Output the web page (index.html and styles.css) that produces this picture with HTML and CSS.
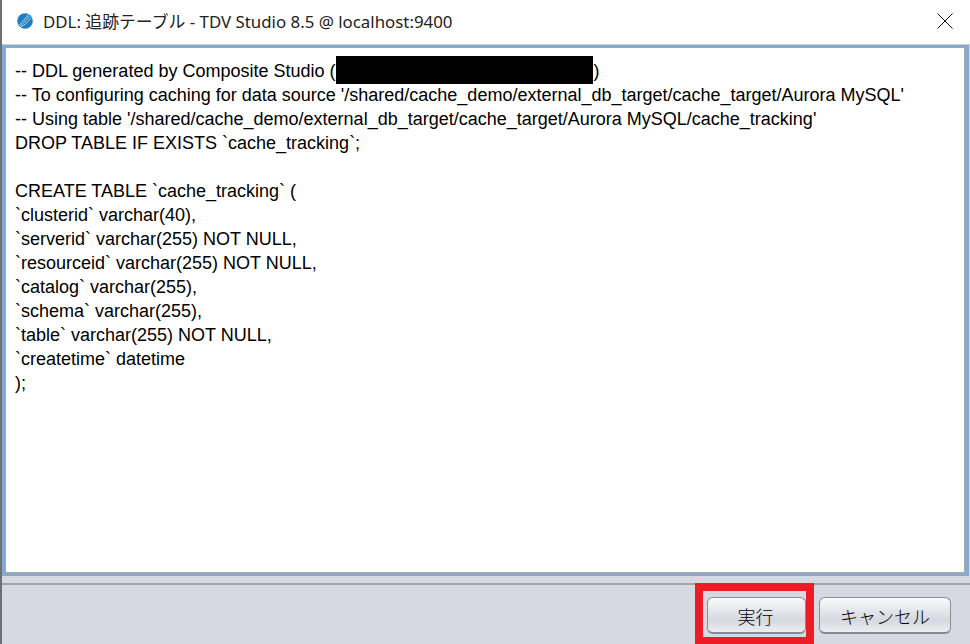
FILE: index.html
```html
<!DOCTYPE html>
<html lang="ja">
<head>
<meta charset="utf-8">
<title>DDL</title>
<link rel="stylesheet" href="styles.css">
</head>
<body>
<div class="window">
  <header class="titlebar">
    <svg class="logo" width="16" height="16" viewBox="0 0 16 16">
      <circle cx="8" cy="8" r="7.8" fill="#1f7fc4"/>
      <path d="M1.5 12.5 C5 9.5 8 6 11.5 1.5 M2.5 13.5 C6 11 9.5 7.5 12.5 3 M4 14 C7.5 12 11 9 14 5" stroke="#d5e9f6" stroke-width="0.8" fill="none"/>
    </svg>
    <span class="title">DDL: 追跡テーブル - TDV Studio 8.5 @ localhost:9400</span>
    <svg class="close" width="16" height="16" viewBox="0 0 16 16">
      <path d="M0.5 0.5 L15.5 15.5 M15.5 0.5 L0.5 15.5" stroke="#111" stroke-width="1" fill="none"/>
    </svg>
  </header>
  <main class="editor-frame">
    <div class="editor">
      <div class="line">-- DDL generated by Composite Studio (<span class="redact-slot"><span class="redact"></span></span>)</div>
      <div class="line">-- To configuring caching for data source '/shared/cache_demo/external_db_target/cache_target/Aurora MySQL'</div>
      <div class="line">-- Using table '/shared/cache_demo/external_db_target/cache_target/Aurora MySQL/cache_tracking'</div>
      <div class="line">DROP TABLE IF EXISTS `cache_tracking`;</div>
      <div class="line">&nbsp;</div>
      <div class="line">CREATE TABLE `cache_tracking` (</div>
      <div class="line">`clusterid` varchar(40),</div>
      <div class="line">`serverid` varchar(255) NOT NULL,</div>
      <div class="line">`resourceid` varchar(255) NOT NULL,</div>
      <div class="line">`catalog` varchar(255),</div>
      <div class="line">`schema` varchar(255),</div>
      <div class="line">`table` varchar(255) NOT NULL,</div>
      <div class="line">`createtime` datetime</div>
      <div class="line">);</div>
    </div>
  </main>
  <footer class="actions">
    <div class="highlight"><button class="btn btn-run">実行</button></div>
    <button class="btn btn-cancel">キャンセル</button>
  </footer>
</div>
</body>
</html>
```
FILE: styles.css
```css
* { box-sizing: border-box; }
html, body { margin: 0; padding: 0; }
body { width: 970px; height: 644px; overflow: hidden; background: #d6d9e2; }
.window {
  width: 970px; height: 644px;
  display: flex; flex-direction: column;
  background: #d6d9e2;
  border-left: 2px solid #6d7076;
}
.titlebar {
  height: 45px; flex: none;
  display: flex; align-items: center;
  background: #fff;
  border-bottom: 1px solid #c6d2e0;
  padding: 0 17px 0 15px;
}
.logo { flex: none; margin-right: 10px; margin-top: -2px; }
.title {
  flex: 1;
  font: 16.85px "Noto Sans", "Noto Sans CJK JP", sans-serif;
  color: #222;
  margin-top: -3px;
}
.close { flex: none; margin-top: -2px; }
.editor-frame {
  height: 531px; flex: none;
  margin-right: 1px;
  border: 3px solid #84a9d2;
  border-top-width: 2px;
  border-bottom-width: 2px;
  background: #84a9d2;
}
.editor {
  height: 100%;
  background: #fff;
  border: 2px solid #a3a6ab;
  border-left-width: 1px;
  border-top-width: 1px;
  padding: 11px 0 0 9px;
  overflow: hidden;
}
.line {
  font: 18px/24px "Liberation Sans", Arial, sans-serif;
  color: #000;
  white-space: pre;
}
.redact-slot { display: inline-block; position: relative; width: 258px; height: 1px; }
.redact {
  position: absolute;
  left: 1px; top: -20px;
  width: 257px; height: 28px;
  background: #000;
}
.actions {
  flex: 1;
  display: flex; align-items: flex-start; justify-content: flex-end;
  gap: 5px;
  border-top: 2px solid #a2a4a8;
  margin-top: 7px;
  padding: 0 19px 0 0;
}
.highlight {
  height: 61px;
  margin-top: -2px;
  border: 8px solid #ed1c24;
  border-bottom-width: 7px;
  display: flex; align-items: flex-start;
  width: 119px;
  justify-content: flex-end;
  padding-top: 6px;
}
.btn {
  height: 37px;
  border: 1px solid #8b8e93;
  border-bottom: 2px solid #85888e;
  border-radius: 6px;
  background: linear-gradient(#fbfbfc 0%, #e9eaee 30%, #d5d8df 65%, #eceef1 100%);
  font: 300 18px "Noto Sans CJK JP", sans-serif;
  color: #000;
  padding: 2px 0 0;
}
.btn-run { width: 99px; padding-right: 2px; }
.btn-cancel { width: 132px; margin-top: 12px; }
```
